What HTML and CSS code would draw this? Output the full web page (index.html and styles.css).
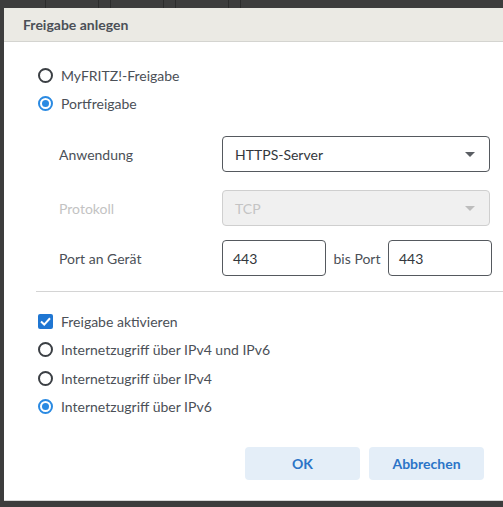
FILE: index.html
```html
<!DOCTYPE html>
<html lang="de">
<head>
<meta charset="utf-8">
<title>Freigabe anlegen</title>
<link rel="stylesheet" href="styles.css">
</head>
<body>
<div class="backdrop">
  <div class="topbar">
    <span class="cell c1"></span><span class="cell c2"></span><span class="cell c3"></span><span class="cell c2"></span><span class="cell c3"></span><span class="cell c2"></span><span class="cell c3"></span><span class="cell c4"></span>
  </div>
  <div class="dialog">
    <div class="dialog-head">Freigabe anlegen</div>
    <div class="dialog-body">
      <label class="opt"><span class="radio"></span>MyFRITZ!-Freigabe</label>
      <label class="opt"><span class="radio on"></span>Portfreigabe</label>

      <div class="form">
        <div class="row">
          <span class="lbl">Anwendung</span>
          <div class="select">HTTPS-Server<span class="caret"></span></div>
        </div>
        <div class="row r2">
          <span class="lbl dis">Protokoll</span>
          <div class="select disabled">TCP<span class="caret"></span></div>
        </div>
        <div class="row r3">
          <span class="lbl">Port an Gerät</span>
          <div class="port-group">
            <div class="input">443</div>
            <span class="bis">bis Port</span>
            <div class="input">443</div>
          </div>
        </div>
      </div>

      <hr class="sep">

      <label class="opt"><span class="check"><svg viewBox="0 0 15 15" width="15" height="15"><path d="M3 7.6 L6.2 10.6 L12 4.3" fill="none" stroke="#fff" stroke-width="2"/></svg></span>Freigabe aktivieren</label>
      <label class="opt"><span class="radio"></span>Internetzugriff über IPv4 und IPv6</label>
      <label class="opt"><span class="radio"></span>Internetzugriff über IPv4</label>
      <label class="opt"><span class="radio on"></span>Internetzugriff über IPv6</label>

      <div class="actions">
        <button class="btn">OK</button>
        <button class="btn">Abbrechen</button>
      </div>
    </div>
  </div>
</div>
</body>
</html>
```
FILE: styles.css
```css
* { box-sizing: border-box; }
html, body { margin: 0; padding: 0; }
body {
  background: #3d3d3d;
  font-family: Lato, "Noto Sans", sans-serif;
  font-size: 14px;
  color: #4b5057;
  width: 503px;
  height: 507px;
  overflow: hidden;
}
.backdrop { position: relative; height: 507px; }
.topbar { display: flex; height: 8px; }
.cell { height: 8px; border-right: 1px solid #2c2c2c; }
.c1 { width: 46px; }
.c2 { width: 53px; }
.c3 { width: 12px; }
.c4 { flex: 1; border-right: none; }

.dialog {
  margin-left: 4px;
  width: 499px;
  height: 493px;
  background: #fff;
  border-bottom: 1px solid #d8d8d8;
  display: flex;
  flex-direction: column;
}
.dialog-head {
  height: 34px;
  background: #ebeae4;
  border-bottom: 1px solid #d4d4d0;
  padding: 0 0 0 19px;
  line-height: 33px;
  font-weight: 700;
  font-size: 14px;
  color: #4b5057;
}
.dialog-body { padding: 19px 0 0 33px; flex: 1; }

.opt {
  display: flex;
  align-items: center;
  height: 28.5px;
  gap: 8px;
}
.radio {
  width: 15px; height: 15px;
  margin-left: 1px;
  border: 2px solid #3b3f44;
  border-radius: 50%;
  position: relative;
  flex: none;
}
.radio.on { border-color: #2a8ae2; }
.radio.on::after {
  content: "";
  position: absolute;
  left: 2px; top: 2px;
  width: 7px; height: 7px;
  border-radius: 50%;
  background: #2a8ae2;
}
.check {
  width: 15px; height: 15px;
  margin-left: 1px;
  border-radius: 2px;
  background: #1f76d2;
  display: flex;
  flex: none;
}

.form { padding: 18px 0 0 22px; display: flex; flex-direction: column; }
.row { display: flex; align-items: center; height: 36px; }
.r2 { margin-top: 18px; }
.r3 { margin-top: 14px; }
.lbl { width: 163px; flex: none; }
.lbl.dis { color: #c3c3c3; }
.select {
  width: 268px;
  height: 36px;
  border: 1px solid #55595e;
  border-radius: 4px;
  padding: 0 14px 0 12px;
  display: flex;
  align-items: center;
  justify-content: space-between;
  color: #33373c;
}
.select.disabled { background: #f0f0f0; border-color: #cfcfcf; color: #c4c4c4; }
.caret {
  width: 0; height: 0;
  border-left: 5px solid transparent;
  border-right: 5px solid transparent;
  border-top: 5px solid #5a5e63;
}
.select.disabled .caret { border-top-color: #bdbdbd; }
.port-group { display: flex; align-items: center; }
.input {
  width: 104px; height: 36px;
  border: 1px solid #55595e;
  border-radius: 4px;
  padding: 0 10px;
  display: flex;
  align-items: center;
  color: #33373c;
}
.bis { width: 62px; text-align: center; }

.sep {
  margin: 15px 0 15px -1px;
  border: 0;
  border-top: 1px solid #d4d4d4;
  height: 0;
  width: 470px;
}

.actions { display: flex; gap: 9px; margin: 26px 0 0 208px; }
.btn {
  width: 115px; height: 33px;
  background: #e4eef8;
  border: 0;
  border-radius: 4px;
  color: #2b74c7;
  font-family: inherit;
  font-size: 14px;
  font-weight: 700;
}
```
